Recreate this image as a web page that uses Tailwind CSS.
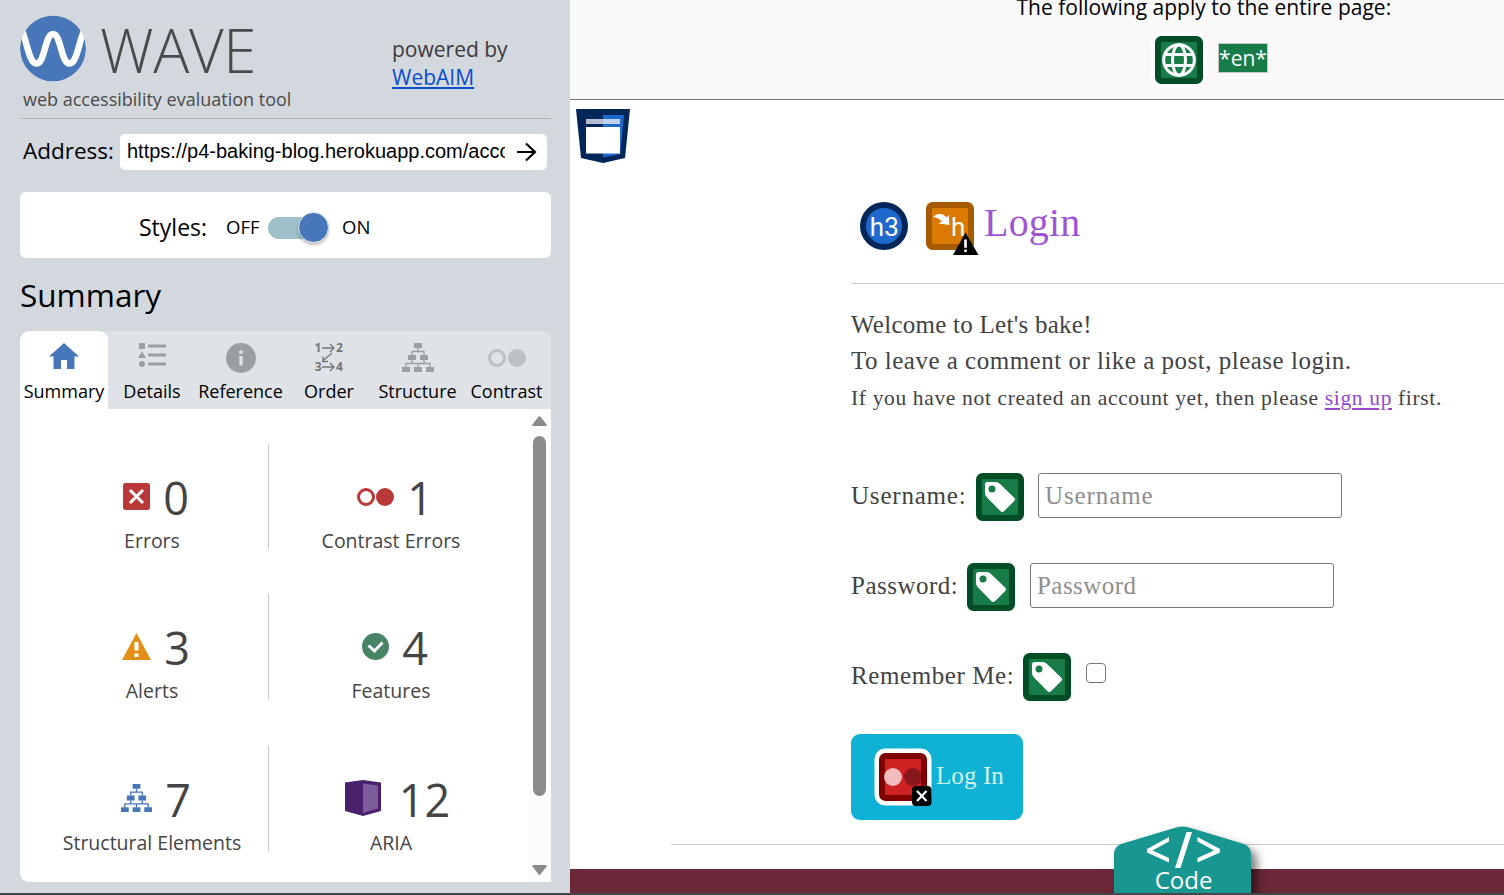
<!DOCTYPE html>
<html lang="en">
<head>
<meta charset="utf-8">
<title>WAVE Report</title>
<script src="https://cdn.jsdelivr.net/npm/@tailwindcss/browser@4"></script>
</head>
<body class="relative flex h-[895px] w-[1504px] overflow-hidden bg-white font-['Open_Sans',sans-serif] text-black">

<svg class="hidden">
  <symbol id="tree" viewBox="0 0 32 29">
    <path fill="currentColor" d="M12 0h8v5h-8zM6 12h8v5H6zM18 12h8v5h-8zM0 24h8v5H0zM12 24h8v5h-8zM24 24h8v5h-8z"/>
    <path fill="none" stroke="currentColor" stroke-width="1.4" d="M16 5v3.5M10 12V8.500h12V12M10 17v3.500M22 17v3.500M4 24v-3.500h24V24M16 20.500V24"/>
  </symbol>
  <symbol id="label-icon" viewBox="0 0 48 48">
    <rect width="48" height="48" rx="6.500" fill="#004d26"/>
    <rect x="6" y="6" width="36" height="36" rx="1" fill="#187c49"/>
    <path fill="#fff" fill-rule="evenodd" d="M11.500 9H19.500Q22 9 23.800 10.800L38 24.500Q40 26.300 38 28.200L28.200 38Q26.200 40 24.300 38L10.800 24.300Q9 22.500 9 20V11.500Q9 9 11.500 9ZM16 12.400a3.500 3.500 0 1 0 0 7a3.500 3.500 0 1 0 0-7Z"/>
  </symbol>
</svg>

<aside class="flex h-full w-[570px] shrink-0 flex-col bg-[#d3d8df] pl-5">
  <header class="flex h-[119px] w-[531px] border-b border-[#b0b6b8]">
    <div class="w-[372px] pt-[15px]">
      <div class="flex h-[67px] items-start">
        <svg class="h-[67px] w-[67px]" viewBox="0 0 67 67"><defs><clipPath id="c"><circle cx="33" cy="33.500" r="33"/></clipPath></defs><g clip-path="url(#c)"><circle cx="33" cy="33.500" r="33" fill="#4777b8"/><path fill="none" stroke="#fff" stroke-width="6.500" d="M-1 10C7 21 8 48.500 16.500 48.500C25 48.500 25 19 33 19C41 19 41 48.500 49.500 48.500C58 48.500 59 21 67 10"/></g></svg>
        <span class="ml-[13px] text-[60px] leading-[70px] font-light tracking-[-0.3px] text-[#4a4a4a]">WAVE</span>
      </div>
      <div class="mt-px pl-[3px] text-[18px] leading-[32px] whitespace-nowrap text-[#4a4a4a]">web accessibility evaluation tool</div>
    </div>
    <div class="pt-[35px] text-[21px] leading-[28px] text-[#3b3b3b]">powered by<br><a class="text-[#0a4dcc] underline decoration-2 underline-offset-[2px]">WebAIM</a></div>
  </header>

  <div class="mt-[15px] flex h-9 items-center">
    <label class="-mt-[3px] w-[100px] pl-[3px] text-[22.5px] leading-[32px]">Address:</label>
    <div class="flex h-9 w-[427px] items-center rounded-[5px] bg-white pl-[7px]">
      <span class="-mt-[2px] w-[378px] overflow-hidden font-['Liberation_Sans',sans-serif] text-[20px] leading-[34px] whitespace-nowrap">https://p4-baking-blog.herokuapp.com/accounts/login/</span>
      <svg class="ml-3 h-[20px] w-[20px]" viewBox="0 0 20 20"><path fill="none" stroke="#000" stroke-width="2.200" d="M0 10h18.500M9 1.500l9 8.500l-9 8.500"/></svg>
    </div>
  </div>

  <div class="mt-[22px] flex h-[66px] w-[531px] items-center rounded-[6px] bg-white pl-[119px]">
    <span class="mt-[3px] w-[87px] text-[23px] leading-[30px]">Styles:</span>
    <span class="mt-[4px] w-[42px] text-[18.500px] leading-[26px]">OFF</span>
    <span class="relative mt-[6px] h-[22px] w-[60px] rounded-full bg-[#9fc0ca]"><span class="absolute -top-[5px] left-[30px] h-[31px] w-[31px] rounded-full border border-[#dfe7f2] bg-[#4777b8] shadow-[0_2px_3px_rgba(0,0,0,0.25)]"></span></span>
    <span class="mt-[4px] ml-[14px] text-[18.500px] leading-[26px]">ON</span>
  </div>

  <h1 class="mt-[15px] h-[58px] text-[31.5px] leading-[44px]">Summary</h1>

  <nav class="flex h-[78px] w-[531px] overflow-hidden rounded-t-[9px] bg-[#dfe3e7] text-[18px] leading-[24px] text-black">
    <div class="flex w-[88px] flex-col items-center rounded-t-[9px] bg-white">
      <div class="flex h-[48px] items-center pt-[2px]"><svg class="h-[26px] w-[30px]" viewBox="0 0 30 26"><path fill="#4777b8" d="M15 0L30 13.500H25.500V26H18V17H12V26H4.500V13.500H0Z"/></svg></div>Summary
    </div>
    <div class="flex w-[88px] flex-col items-center">
      <div class="flex h-[48px] items-center"><svg class="h-6 w-7" viewBox="0 0 28 24"><g fill="#9b9fa2"><path d="M1 0h6v6H1zM4 8.500L8 15H0zM10 1.500h18v3H10zM10 10.500h18v3H10zM10 19.500h18v3H10z"/><circle cx="4" cy="21" r="3"/></g></svg></div>Details
    </div>
    <div class="flex w-[89px] flex-col items-center">
      <div class="flex h-[48px] items-center pt-[5px]"><svg class="h-[30px] w-[30px]" viewBox="0 0 30 30"><circle cx="15" cy="15" r="15" fill="#9b9fa2"/><path fill="#dfe3e7" d="M13.300 7.500h3.400v3.300h-3.400zM13.300 13h3.400v9.500h-3.400z"/></svg></div>Reference
    </div>
    <div class="flex w-[88px] flex-col items-center">
      <div class="flex h-[48px] items-center pt-[4px]"><svg class="h-8 w-7 overflow-visible" viewBox="0 0 28 32"><g fill="#747779" class="font-['Open_Sans',sans-serif] text-[12px] font-bold"><text x="-.5" y="11">1</text><text x="21" y="11">2</text><text x="-.3" y="30">3</text><text x="21" y="30">4</text></g><path fill="none" stroke="#747779" stroke-width="1.300" d="M7 7H19M15 3l4 4l-4 4M7 26H19M15 22l4 4l-4 4M17 12L7 20.500M8 15.500V20.500H13"/></svg></div>Order
    </div>
    <div class="flex w-[89px] flex-col items-center">
      <div class="flex h-[48px] items-center pt-[5px]"><svg class="h-[29px] w-8 text-[#9b9fa2]"><use href="#tree"/></svg></div>Structure
    </div>
    <div class="flex w-[89px] flex-col items-center">
      <div class="flex h-[48px] items-center pt-[6px]"><svg class="h-[18px] w-[38px]" viewBox="0 0 38 18"><circle cx="9" cy="9" r="7.500" fill="none" stroke="#bcc0c4" stroke-width="3"/><circle cx="29" cy="9" r="9" fill="#bcc0c4"/></svg></div>Contrast
    </div>
  </nav>

  <section class="flex h-[473px] w-[531px] overflow-hidden rounded-bl-[9px] bg-white">
    <div class="w-[508px] pt-[35px] pl-4 text-[#444]">
      <div class="flex h-[105px]">
        <div class="flex w-[233px] flex-col items-center border-r border-[#c9c9c9] pt-[22px]">
          <div class="flex h-[60px] items-center gap-[13px] pl-[8px] text-[45px] leading-[60px]"><svg class="h-[27px] w-[27px]" viewBox="0 0 27 27"><rect width="27" height="27" rx="2.500" fill="#b93838"/><path stroke="#fff" stroke-width="3" d="M7 7l13 13M20 7L7 20"/></svg><span class="pt-[3px]">0</span></div>
          <div class="pt-px text-[19.5px] leading-[28px]">Errors</div>
        </div>
        <div class="flex w-[244px] flex-col items-center pt-[22px]">
          <div class="flex h-[60px] items-center gap-[13px] pl-[8px] text-[45px] leading-[60px]"><svg class="mt-px h-[18px] w-[37px]" viewBox="0 0 37 18"><circle cx="9" cy="9" r="7.500" fill="none" stroke="#b93838" stroke-width="3"/><circle cx="28" cy="9" r="9" fill="#b93838"/></svg><span class="pt-[3px]">1</span></div>
          <div class="pt-px text-[19.5px] leading-[28px]">Contrast Errors</div>
        </div>
      </div>
      <div class="mt-[45px] flex h-[105px]">
        <div class="flex w-[233px] flex-col items-center border-r border-[#c9c9c9] pt-[22px]">
          <div class="flex h-[60px] items-center gap-[13px] pl-[8px] text-[45px] leading-[60px]"><svg class="h-[27px] w-[29px]" viewBox="0 0 29 27"><path fill="#e38e14" d="M14.500 0L29 27H0z"/><path fill="#fff" d="M12.500 9h4v8.500h-4zM12.500 20.500h4V24h-4z"/></svg><span class="pt-[3px]">3</span></div>
          <div class="pt-px text-[19.5px] leading-[28px]">Alerts</div>
        </div>
        <div class="flex w-[244px] flex-col items-center pt-[22px]">
          <div class="flex h-[60px] items-center gap-[13px] pl-[8px] text-[45px] leading-[60px]"><svg class="h-[27px] w-[27px]" viewBox="0 0 27 27"><circle cx="13.500" cy="13.500" r="13.500" fill="#468465"/><path fill="none" stroke="#fff" stroke-width="3" d="M6.500 12.500l6 5.500L20.500 9.500"/></svg><span class="pt-[3px]">4</span></div>
          <div class="pt-px text-[19.5px] leading-[28px]">Features</div>
        </div>
      </div>
      <div class="mt-[47px] flex h-[105px]">
        <div class="flex w-[233px] flex-col items-center border-r border-[#c9c9c9] pt-[22px]">
          <div class="flex h-[60px] items-center gap-[13px] pl-[8px] text-[45px] leading-[60px]"><svg class="h-[30px] w-[31px] text-[#4777b8]"><use href="#tree"/></svg><span class="pt-[3px]">7</span></div>
          <div class="pt-px text-[19.5px] leading-[28px]">Structural Elements</div>
        </div>
        <div class="flex w-[244px] flex-col items-center pt-[22px]">
          <div class="flex h-[60px] items-center gap-[18px] pl-[13px] text-[45px] leading-[60px]"><svg class="h-[36px] w-[36px]" viewBox="0 0 36 36"><path fill="#49216d" d="M0 2.500L18 0L36 2.500V31L18 36L0 31z"/><path fill="#7d5c9b" d="M18 3.500L33 5.500V28.500L18 33z"/></svg><span class="pt-[3px]">12</span></div>
          <div class="pt-px text-[19.5px] leading-[28px]">ARIA</div>
        </div>
      </div>
    </div>
    <div class="flex w-[23px] flex-col items-center bg-[#fcfcfc] pt-[7px] pb-[7px]">
      <svg class="h-[10px] w-[15px]" viewBox="0 0 15 10"><path fill="#8b8b8b" d="M6.500.8Q7.500-.5 8.500.8L14.600 8.500Q15 10 13.800 10H1.200Q0 10 .4 8.500Z"/></svg>
      <span class="mt-[10px] h-[360px] w-[13px] rounded-full bg-[#8b8b8b]"></span>
      <svg class="mt-auto h-[10px] w-[15px]" viewBox="0 0 15 10"><path fill="#8b8b8b" d="M6.500 9.200Q7.500 10.500 8.500 9.200L14.600 1.500Q15 0 13.800 0H1.200Q0 0 .4 1.500Z"/></svg>
    </div>
  </section>
</aside>

<div class="flex h-full w-[934px] flex-col overflow-hidden">
  <header class="flex h-[100px] shrink-0 flex-col overflow-hidden border-b border-[#6f7672] bg-[#f9f9f9]">
    <p class="-mt-[7px] shrink-0 pl-[446.500px] text-[21px] leading-[28px] tracking-[0.01px]">The following apply to the entire page:</p>
    <div class="mt-[11px] flex items-center pl-[581px]">
      <svg class="h-14 w-14 shrink-0" viewBox="0 0 56 56"><rect width="56" height="56" rx="10" fill="#fff"/><rect x="4" y="4" width="48" height="48" rx="6.500" fill="#004d26"/><rect x="10" y="10" width="36" height="36" rx="1" fill="#187c49"/><g fill="none" stroke="#fff" stroke-width="3"><circle cx="28" cy="28" r="15.300"/><ellipse cx="28" cy="28" rx="6.500" ry="15.300"/><path d="M14.500 22.500h27M14.500 33.500h27"/></g></svg>
      <span class="-mt-[4px] ml-[11px] h-[30px] w-[50px] border border-[#c5c8c5] bg-[#187c49] text-center text-[21px] leading-[28px] text-white">*en*</span>
    </div>
  </header>

  <main class="h-[769px] shrink-0 pt-[9px] font-['Liberation_Serif',serif] text-[#424242]">
    <svg class="ml-[6px] h-[54px] w-[54px]" viewBox="0 0 54 54"><path fill="#00265a" d="M0 0h54l-5 49l-22 5l-22-5z"/><path fill="#1f68cc" d="M27 6h21l-3.800 39L27 48.500z"/><path fill="#fff" fill-opacity=".7" d="M10 10h34v5H10z"/><path fill="#fff" d="M10 18h34v26.500H10z"/></svg>

    <div class="mt-[39px] ml-[281px]">
      <div class="flex h-[82px] items-start border-b border-[#c8cac8] pl-[9px]">
        <svg class="h-12 w-12" viewBox="0 0 48 48"><circle cx="24" cy="24" r="24" fill="#00265a"/><circle cx="24" cy="24" r="18" fill="#1f68cc"/><text x="24.300" y="34" text-anchor="middle" fill="#fff" class="font-[Roboto,sans-serif] text-[26px]">h3</text></svg>
        <svg class="ml-[18px] h-[54px] w-[54px]" viewBox="0 0 54 54"><rect width="48" height="48" rx="6.500" fill="#a65b00"/><rect x="6" y="6" width="36" height="36" rx="1" fill="#db7a00"/><path fill="#fff" d="M7 15Q14 8.500 21 15.500L22.700 12.500L23.500 23L12.500 21.500L16 19.500Q12.500 15.500 7 15Z"/><text x="25" y="34" fill="#fff" class="font-[Roboto,sans-serif] text-[26px]">h</text><path d="M39.500 30.500L52.500 53H27z"/><path fill="#fff" d="M38.200 37.500h2.600v8.300h-2.600zM38.200 47.500h2.600v2.500h-2.600z"/></svg>
        <h3 class="ml-[4px] text-[40px] leading-[41px] tracking-[0.2px] text-[#9f55d3]">Login</h3>
      </div>
      <p class="mt-[23px] h-[36px] text-[25px] leading-[36px] tracking-[0.26px] whitespace-nowrap">Welcome to Let's bake!</p>
      <p class="h-[36px] text-[25px] leading-[36px] tracking-[0.5px] whitespace-nowrap">To leave a comment or like a post, please login.</p>
      <p class="h-[36px] text-[21.500px] leading-[38px] tracking-[0.65px] whitespace-nowrap">If you have not created an account yet, then please <a class="text-[#9747cf] underline underline-offset-[3px]">sign up</a> first.</p>

      <div class="mt-[58px] flex h-12 items-start text-[25px] leading-[45px]">
        <label class="w-[125px] tracking-[0.8px]">Username:</label>
        <svg class="h-12 w-12"><use href="#label-icon"/></svg>
        <div class="ml-[14px] h-[45px] w-[304px] rounded-[3px] border border-[#767676] pl-[6px] leading-[43px] tracking-[0.9px] text-[#8e8e8e]">Username</div>
      </div>
      <div class="mt-[42px] flex h-12 items-start text-[25px] leading-[45px]">
        <label class="w-[116px] tracking-[0.5px]">Password:</label>
        <svg class="h-12 w-12"><use href="#label-icon"/></svg>
        <div class="ml-[15px] h-[45px] w-[304px] rounded-[3px] border border-[#767676] pl-[6px] leading-[43px] tracking-[0.45px] text-[#8e8e8e]">Password</div>
      </div>
      <div class="mt-[42px] flex h-12 items-start text-[25px] leading-[45px]">
        <label class="w-[172px] tracking-[0.58px] whitespace-nowrap">Remember Me:</label>
        <svg class="h-12 w-12"><use href="#label-icon"/></svg>
        <span class="mt-[10px] ml-[15px] h-5 w-5 rounded-[4px] border-[1.500px] border-[#767676] bg-white"></span>
      </div>
      <div class="mt-[33px] flex h-[86px] w-[172px] items-start rounded-[9px] bg-[#0fb1d5] pt-[14px] pl-[23px] text-[25px] text-[#d0f4ea]">
        <svg class="h-[58px] w-[58px]" viewBox="0 0 58 58"><rect x=".5" y=".5" width="57" height="57" rx="11" fill="#fff"/><rect x="5" y="5" width="48" height="48" rx="6.500" fill="#800000"/><rect x="11" y="11" width="36" height="36" rx="1" fill="#cd2122"/><circle cx="19" cy="29" r="9" fill="#fff" fill-opacity=".7"/><circle cx="39" cy="29" r="9" fill="#50101a" fill-opacity=".55"/><rect x="38" y="38" width="19.500" height="20" rx="4"/><path stroke="#fff" stroke-width="2.200" d="M43 43l9.500 10M52.500 43L43 53"/></svg>
        <span class="ml-[4px] leading-[55px] tracking-[0.1px] whitespace-nowrap">Log In</span>
      </div>
    </div>
    <div class="mt-6 ml-[101px] h-px bg-[#c8cac8]"></div>
  </main>
  <footer class="h-[26px] shrink-0 bg-[#6a2838]"></footer>
</div>

<button class="absolute top-[826px] left-[1114px] h-[69px] w-[137px] text-white">
  <svg class="absolute top-0 left-0 h-[69px] w-[137px] overflow-visible drop-shadow-[6px_6px_5px_rgba(0,0,0,0.5)]" viewBox="0 0 137 69"><path fill="#189690" d="M0 80V28Q0 21 7 18L62 1.500Q68.500-.5 75 1.500L130 18Q137 21 137 28V80Z"/></svg>
  <svg class="absolute top-0 left-0 h-[69px] w-[137px]" viewBox="0 0 137 69"><path fill="#fff" d="M55 11V15.500L38.500 24.500L55 32V36.500L33 26.500V23zM83.500 11V15.500L100 24.500L83.500 32V36.500L106 26.500V23zM72.500 6H78L66.500 42H61z"/></svg>
  <span class="absolute top-[37px] left-0 w-full pl-[2px] text-center text-[24px] leading-[34px]">Code</span>
</button>
<div class="absolute bottom-0 left-0 h-[2px] w-full bg-[#444649]"></div>
</body>
</html>
